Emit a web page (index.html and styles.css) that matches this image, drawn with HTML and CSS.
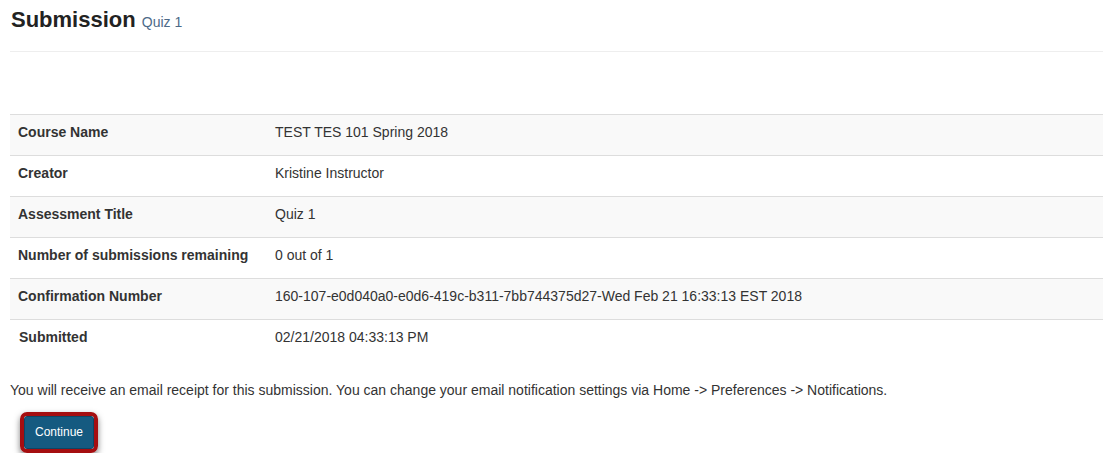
FILE: index.html
```html
<!DOCTYPE html>
<html>
<head>
<meta charset="utf-8">
<link rel="stylesheet" href="styles.css">
</head>
<body>
<div class="page">
  <div class="page-header">
    <h1 class="title">Submission <small class="subtitle">Quiz 1</small></h1>
  </div>
  <table class="info">
    <colgroup><col class="col-label"><col></colgroup>
    <tbody>
      <tr><th>Course Name</th><td>TEST TES 101 Spring 2018</td></tr>
      <tr><th>Creator</th><td>Kristine Instructor</td></tr>
      <tr><th>Assessment Title</th><td>Quiz 1</td></tr>
      <tr><th>Number of submissions remaining</th><td>0 out of 1</td></tr>
      <tr><th>Confirmation Number</th><td>160-107-e0d040a0-e0d6-419c-b311-7bb744375d27-Wed Feb 21 16:33:13 EST 2018</td></tr>
      <tr class="last"><th>Submitted</th><td>02/21/2018 04:33:13 PM</td></tr>
    </tbody>
  </table>
  <p class="note">You will receive an email receipt for this submission. You can change your email notification settings via Home -&gt; Preferences -&gt; Notifications.</p>
  <div class="actions">
    <span class="highlight"><button class="btn">Continue</button></span>
  </div>
</div>
</body>
</html>
```
FILE: styles.css
```css
html, body {
  margin: 0;
  padding: 0;
  background: #fff;
}
body {
  font-family: "Liberation Sans", Arial, sans-serif;
  font-size: 14px;
  line-height: 20px;
  color: #333;
}
.page {
  padding: 0 6px 0 10px;
}
.page-header {
  padding-bottom: 17px;
  border-bottom: 1px solid #eee;
}
.title {
  margin: 8px 0 0 1px;
  font-size: 22px;
  line-height: 24px;
  font-weight: bold;
  color: #222;
}
.subtitle {
  font-size: 14px;
  font-weight: normal;
  color: #4d6a88;
}
.info {
  margin-top: 62px;
  width: 100%;
  border-collapse: collapse;
  table-layout: fixed;
}
.col-label {
  width: 257px;
}
.info th, .info td {
  text-align: left;
  padding: 7px 8px 13px 8px;
  border-top: 1px solid #ddd;
  vertical-align: top;
}
.info th {
  font-weight: bold;
  color: #333;
}
.info tbody tr:nth-child(odd) {
  background: #f9f9f9;
}
.info tr.last th {
  padding-left: 9px;
}
.note {
  margin: 20px 0 0 0;
}
.actions {
  margin-top: 12px;
  padding-left: 10px;
}
.highlight {
  display: inline-block;
  border: 4px solid #a50e10;
  border-radius: 7px;
  box-shadow: 0 3px 6px rgba(0, 0, 0, 0.5);
}
.btn {
  display: block;
  margin: 0;
  font-family: "Liberation Sans", Arial, sans-serif;
  font-size: 12px;
  line-height: 17px;
  color: #fff;
  background: #155a80;
  border: 1px solid #0e4565;
  border-radius: 3px;
  padding: 7px 10px 7px 10px;
  width: 70px;
  text-align: center;
}
```
